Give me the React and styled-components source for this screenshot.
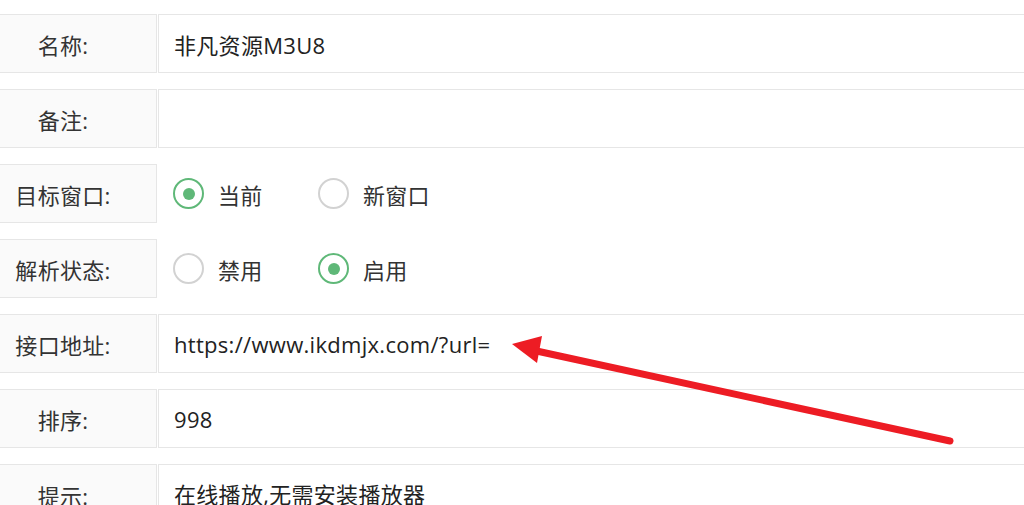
import React from "react";
import styled, { createGlobalStyle } from "styled-components";

const GlobalStyle = createGlobalStyle`
  html, body {
    margin: 0;
    padding: 0;
    background: #ffffff;
    overflow: hidden;
  }
  body {
    font-family: "Open Sans", "Noto Sans CJK SC", sans-serif;
    color: #333333;
  }
`;

const Page = styled.div`
  position: relative;
  width: 1024px;
  height: 505px;
  overflow: hidden;
  padding-top: 14px;
  box-sizing: border-box;
`;

const Item = styled.div`
  display: flex;
  height: ${(p) => p.height || 59}px;
  margin-bottom: 16px;
`;

const Label = styled.div`
  width: 157px;
  flex-shrink: 0;
  box-sizing: border-box;
  background: #fafafa;
  border: 1px solid #e6e6e6;
  border-left: none;
  display: flex;
  align-items: ${(p) => (p.top ? "flex-start" : "center")};
  justify-content: center;
  padding: ${(p) => (p.top ? "14px 30px 0 0" : "0 30px 0 0")};
  font-size: 22px;
  letter-spacing: 0.3px;
  color: #333;
  white-space: nowrap;
`;

const Field = styled.div`
  flex: 1;
  box-sizing: border-box;
  border: 1px solid #e6e6e6;
  border-right: none;
  margin-left: 1px;
  display: flex;
  align-items: ${(p) => (p.top ? "flex-start" : "center")};
  padding: ${(p) => (p.top ? "12px 15px 0" : "0 15px")};
  font-size: 22px;
  letter-spacing: 0.3px;
  color: #222;
  white-space: nowrap;
`;

const RadioGroup = styled.div`
  flex: 1;
  display: flex;
  align-items: center;
  padding-left: 16px;
`;

const Option = styled.div`
  display: flex;
  align-items: center;
  width: 145px;
  font-size: 22px;
  letter-spacing: 0.3px;
  color: #333;
`;

const Circle = styled.span`
  width: 31px;
  height: 31px;
  box-sizing: border-box;
  border-radius: 50%;
  border: 2.5px solid ${(p) => (p.checked ? "#5fb878" : "#d2d2d2")};
  display: flex;
  align-items: center;
  justify-content: center;
  margin-right: 14px;
  &::after {
    content: "";
    width: 12px;
    height: 12px;
    border-radius: 50%;
    background: ${(p) => (p.checked ? "#5fb878" : "transparent")};
  }
`;

const Arrow = styled.svg`
  position: absolute;
  left: 0;
  top: 0;
  pointer-events: none;
`;

const Radio = ({ checked, children }) => (
  <Option>
    <Circle checked={checked} />
    {children}
  </Option>
);

export default function App() {
  return (
    <>
      <GlobalStyle />
      <Page>
        <Item>
          <Label>名称:</Label>
          <Field>非凡资源M3U8</Field>
        </Item>
        <Item>
          <Label>备注:</Label>
          <Field />
        </Item>
        <Item>
          <Label>目标窗口:</Label>
          <RadioGroup>
            <Radio checked>当前</Radio>
            <Radio>新窗口</Radio>
          </RadioGroup>
        </Item>
        <Item>
          <Label>解析状态:</Label>
          <RadioGroup>
            <Radio>禁用</Radio>
            <Radio checked>启用</Radio>
          </RadioGroup>
        </Item>
        <Item>
          <Label>接口地址:</Label>
          <Field>https://www.ikdmjx.com/?url=</Field>
        </Item>
        <Item>
          <Label>排序:</Label>
          <Field>998</Field>
        </Item>
        <Item height={120}>
          <Label top>提示:</Label>
          <Field top>在线播放,无需安装播放器</Field>
        </Item>
        <Arrow width="1024" height="505" viewBox="0 0 1024 505">
          <line
            x1="950"
            y1="441"
            x2="532"
            y2="350"
            stroke="#ed1c24"
            strokeWidth="7"
            strokeLinecap="round"
          />
          <polygon points="512,344 542,336 537,363" fill="#ed1c24" />
        </Arrow>
      </Page>
    </>
  );
}
